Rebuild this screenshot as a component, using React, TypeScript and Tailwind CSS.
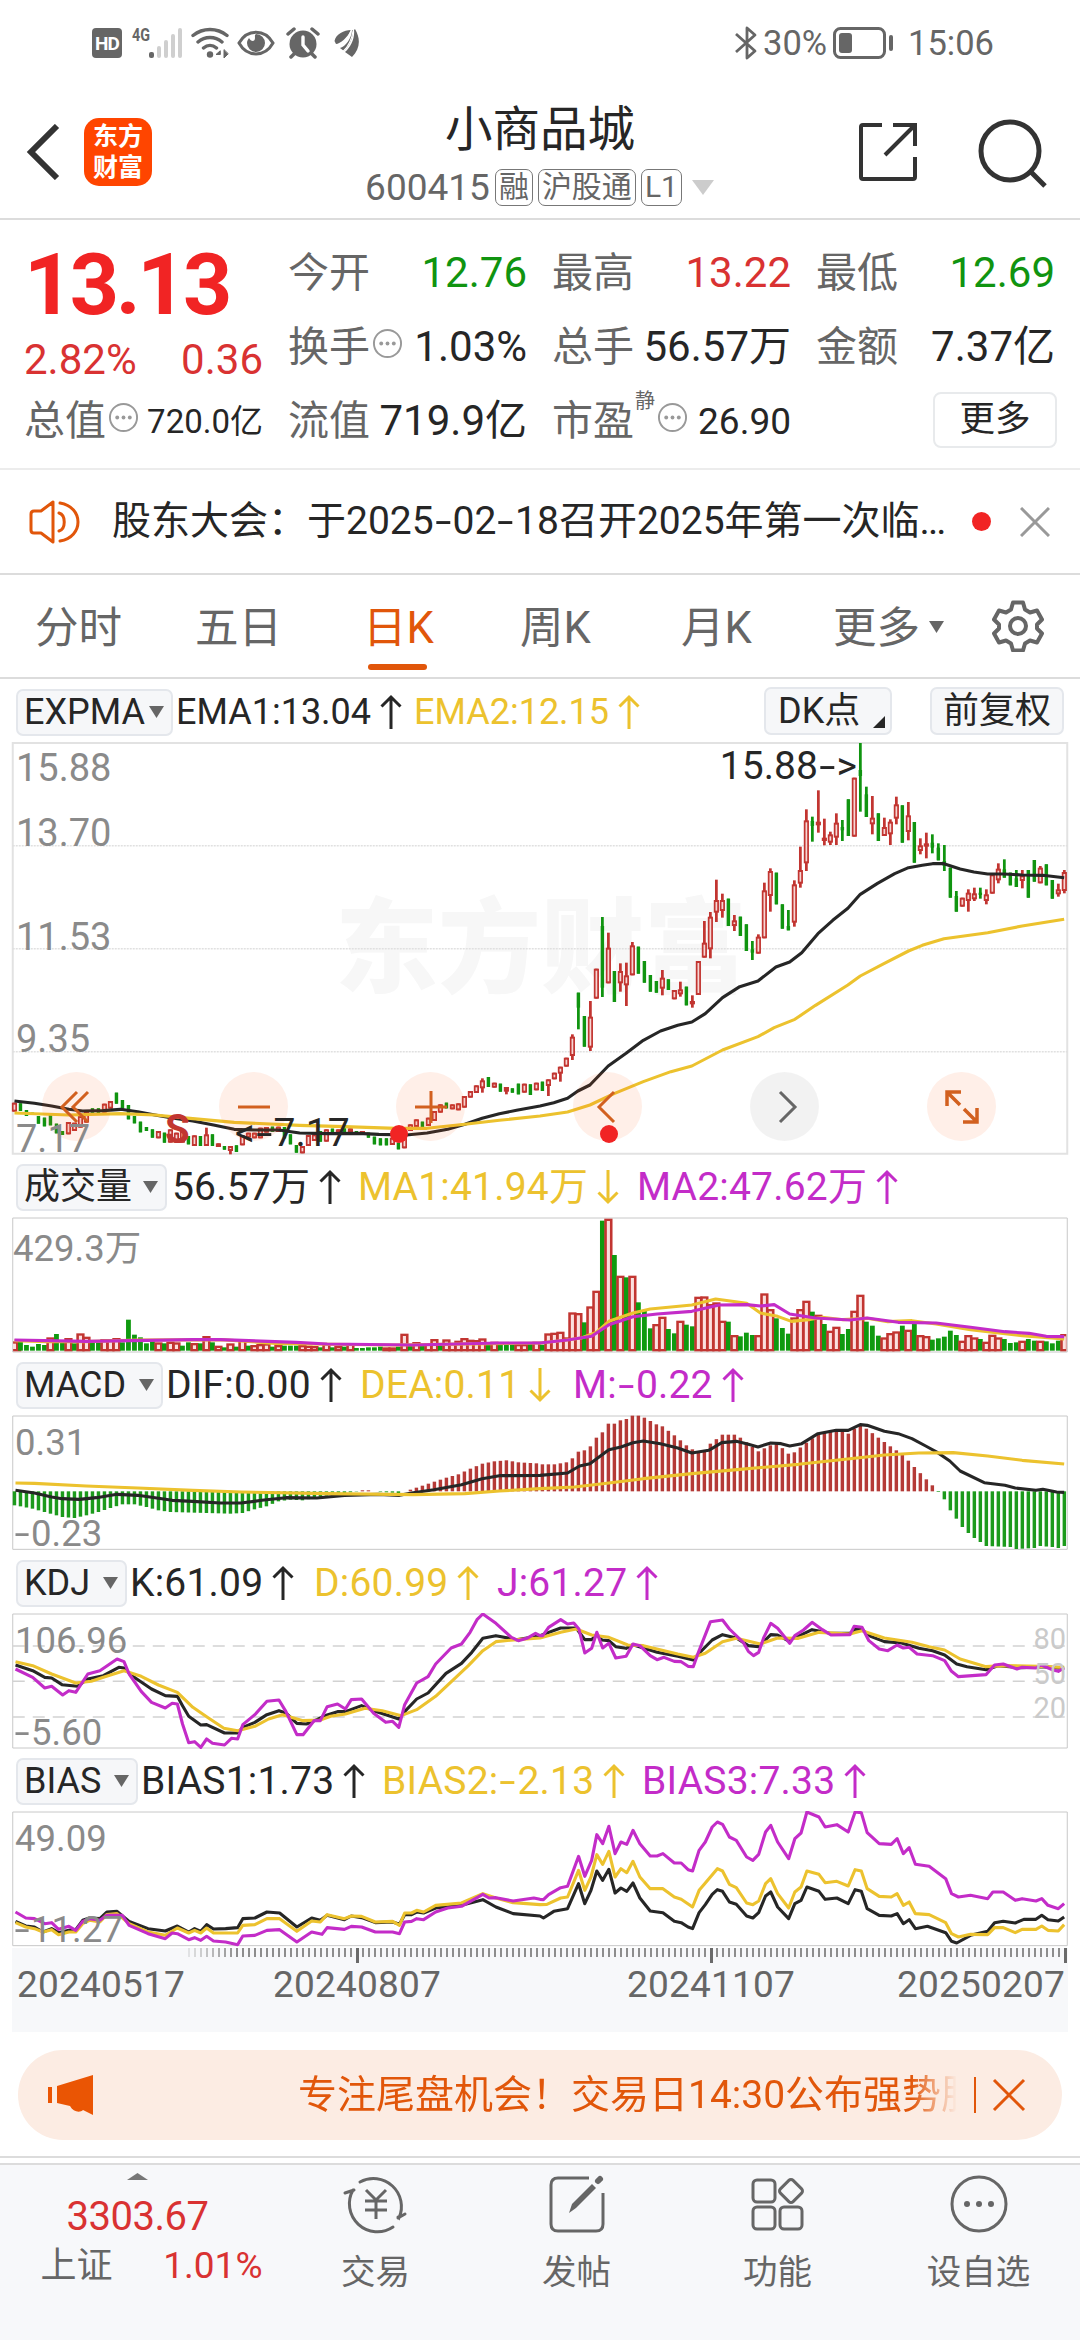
import type { ReactNode } from "react";

/* Charts share one drawing space: 3136 units across the page, 3 units per pixel down. */
const STEP = 17.42;
const SPLIT = 1568;
const cx = (i: number) => 42 + STEP * i;

const RED = "#c23531";
const GREEN = "#109410";
const INK = "#262626";
const YELLOW = "#ecc22e";
const MAGENTA = "#c32cc8";

/* kind, body top, body bottom [, high, low] */
const CANDLES = `r 1295 1322;g 1297 1320;g 1317 1335;g 1325 1332;g 1335 1358;g 1340 1366;g 1332 1363;g 1358 1387;g 1380 1392;r 1353 1390;r 1355 1380;r 1335 1370;r 1320 1355;g 1312 1325;g 1312 1330;r 1298 1325;r 1290 1313;g 1265 1298;g 1287 1313;g 1302 1345;
g 1335 1357;g 1352 1384;g 1368 1380;g 1375 1400;r 1380 1402;g 1385 1415;r 1375 1415;r 1385 1415;r 1380 1415;g 1395 1420;r 1393 1425;g 1395 1425;r 1390 1425 1370 1425;g 1390 1425;r 1417 1428;g 1425 1436;r 1425 1440 1425 1450;g 1423 1443;r 1393 1423;r 1385 1400;
r 1385 1402;r 1370 1402;r 1368 1385;g 1367 1382;r 1367 1383;g 1368 1402;g 1390 1420;g 1422 1445;r 1425 1447;r 1392 1425;r 1390 1410;g 1380 1412;r 1375 1412;g 1373 1390;r 1375 1388;g 1372 1385;r 1372 1385;g 1380 1387;r 1380 1387;g 1385 1400;
g 1397 1420;g 1402 1423;g 1402 1423;r 1400 1422;g 1415 1435;r 1370 1432;r 1360 1380;r 1345 1368;g 1352 1368;r 1340 1365;r 1320 1350;r 1300 1325;g 1295 1312;r 1300 1315;r 1297 1318;r 1275 1310;r 1260 1280;r 1243 1266;r 1228 1252 1222 1265;g 1218 1248;
r 1235 1250;g 1238 1262;r 1248 1262 1248 1270;g 1252 1265;g 1238 1270;r 1238 1265;g 1240 1272;r 1235 1258;g 1232 1260;r 1225 1245 1225 1275;r 1205 1225;r 1187 1208 1187 1232;r 1160 1187;r 1097 1155 1090 1167;g 965 1010 965 1075;g 1035 1127;r 1037 1130 990 1140;r 893 983;g 765 950 738 978;r 830 937 785 937;
g 900 993;r 900 937 877 962;r 913 943 875 1005;r 823 913 813 913;g 827 908;g 870 935;g 912 962;g 930 965;r 920 953 897 973;g 925 957;r 957 985;r 955 970 932 977;g 947 1003;r 990 1000 973 1010;r 870 972;r 815 860 750 860;r 737 835 723 862;r 687 725 626 753;r 687 720 668 740;g 683 765;
r 748 765 732 780;g 737 795;g 760 840;g 835 845 810 867;r 797 848 790 848;r 658 802 635 802;r 600 675 592 722;g 605 700;g 700 773;g 765 778 717 778;r 640 755 628 767;r 597 638 527 650;r 448 577 415 600;g 450 465 437 512;r 452 463 358 485;r 500 510 443 523;r 490 515 482 522;r 455 500 427 522;g 468 478 447 510;g 385 495;
r 320 497;g 297 315 216 422;g 370 438 347 438;r 440 460 375 490;g 427 510;r 468 495 440 495;r 452 490 445 522;r 400 443 377 460;g 403 515;r 433 483 393 508;g 453 575;r 523 540 502 550;r 517 527 485 562;g 515 530 490 547;g 530 568 517 568;g 570 585 522 600;g 590 680;g 675 722 660 722;r 680 707;r 665 690 655 722;
r 667 685 650 690;g 665 672 650 683;r 670 690 655 700;r 610 668;r 593 628 577 637;g 595 620 565 620;g 605 643;g 622 648 597 648;r 613 630 597 652;g 597 680;g 567 632;r 590 637 585 637;g 580 643;g 627 683;r 655 670 638 677;r 603 660 597 667`
  .split(";")
  .map((s) => {
    const [kind, ...v] = s.trim().split(" ");
    const [top, bottom, high, low] = v.map(Number);
    return { up: kind === "r", top, bottom, high: high ?? top, low: low ?? bottom };
  });

const VOLUME = `r572 g572 g583 g588 g580 g583 r560 g550 g575 r562 g578 r548 r558 g575 g575 r565 r565 r562 g575 g507 g552 g560 g578 g572 r575 g578 r573 r575 g585 g575 r577 g578 r556 g575 r585 g590 r578 g588 r567 g585 r583 r580 r578 g588 r583 g585 g585 g585 r583 r585 r586 g590 r577 g590 r586 g588 r577 g592 g592 g590 g590 g588 r590 r590 g588 r549 g585 r574 g585 r577 r565 g580 r566 r577 r570 r562 r567 r568 r563 g575 r573 g583 g583 g583 r580 r580 g575 r573 g582 r548 r546 r543 r560 r485 r487 g515 r467 r420 g210 r204 g313 r375 g380 r375 g455 g480 g533 r520 r498 g535 g548 r510 g522 g527 r438 r437 r460 r455 r510 g513 r553 g557 g546 g553 r553 r428 r475 g503 g532 g549 r500 r475 r450 g483 r492 g520 r540 r528 g550 g535 r480 r432 g513 g525 g555 r560 r547 r542 g525 r537 g508 r553 r556 g567 g563 g558 g540 g553 r570 r553 r560 g565 r573 r552 r560 g565 g577 g575 r570 g565 g570 r570 g572 g578 g570 r550`
  .split(" ")
  .map((s) => ({ up: s[0] === "r", top: Number(s.slice(1)) }));

/* bar index, bar end */
const MACD_KEYS = [
  [0, 1065], [1, 1068], [3, 1075], [5, 1085], [8, 1100], [10, 1103], [12, 1095], [14, 1085], [16, 1073], [18, 1062], [20, 1062], [22, 1070], [24, 1080], [26, 1085], [36, 1090], [38, 1088], [40, 1077], [42, 1068], [44, 1053], [46, 1048], [48, 1050], [50, 1043], [52, 1036], [54, 1030], [57, 1024], [58, 1020], [59, 1020], [60, 1023], [62, 1026], [64, 1028], [66, 1018], [68, 1006], [70, 994], [72, 982], [74, 972], [76, 955], [78, 940], [80, 933], [82, 930], [84, 936], [87, 939], [88, 942], [90, 942], [92, 936], [93, 924], [94, 904], [95, 900], [96, 888], [97, 862], [98, 846], [99, 820], [100, 820], [101, 810], [102, 806], [103, 796], [104, 796], [105, 802], [107, 822], [108, 828], [110, 855], [112, 885], [113, 897], [114, 903], [115, 900], [116, 880], [118, 853], [120, 853], [121, 862], [123, 890], [124, 903], [126, 885], [127, 877], [129, 910], [130, 906], [132, 877], [134, 851], [136, 841], [138, 845], [139, 850], [140, 835], [141, 826], [142, 835], [144, 862], [146, 888], [148, 912], [150, 950], [152, 987], [153, 1005], [154, 1025], [155, 1047], [156, 1080], [157, 1105], [158, 1130], [159, 1148], [160, 1163], [161, 1175], [162, 1187], [166, 1190], [167, 1196], [170, 1193], [171, 1187], [173, 1190], [174, 1193], [175, 1187],
];

const macdBars = MACD_KEYS.slice(0, -1).flatMap(([i, v], k) => {
  const [j, w] = MACD_KEYS[k + 1];
  return Array.from({ length: j - i }, (_, n) => ({ i: i + n, end: v + ((w - v) * n) / (j - i) }));
});
macdBars.push({ i: 175, end: 1187 });

type Points = string;
/* Points of the left half, then of the right half */
const line = (left: Points, right: Points) => {
  const parse = (s: string, dx: number) =>
    s.split(";").map((p) => {
      const [x, y] = p.split(",").map(Number);
      return `${x + dx},${y}`;
    });
  return [...parse(left, 0), ...parse(right, SPLIT)].join(" ");
};

const EMA1 = line(
  "42,1290;100,1297;150,1305;200,1315;240,1320;300,1319;350,1315;400,1322;450,1332;500,1341;560,1350;620,1362;680,1375;740,1377;810,1377;870,1386;950,1388;1040,1387;1100,1390;1180,1392;1240,1386;1300,1375;1350,1360;1400,1342;1450,1328;1500,1318",
  "0,1305;40,1295;80,1282;110,1260;145,1242;198,1185;250,1147;300,1108;350,1080;400,1063;441,1053;480,1028;530,980;580,947;633,930;685,888;725,873;760,845;807,788;850,748;894,712;930,670;980,637;1030,608;1070,590;1110,583;1140,578;1173,578;1220,594;1260,603;1300,609;1347,609;1400,612;1460,613;1522,620"
);
const EMA2 = line(
  "42,1326;200,1332;350,1328;450,1332;560,1343;680,1354;870,1363;1000,1367;1150,1372;1240,1372;1350,1360;1450,1348",
  "0,1335;80,1323;145,1302;215,1268;300,1232;380,1202;441,1185;530,1137;633,1097;680,1070;740,1045;800,1003;894,942;930,915;1000,877;1070,840;1110,823;1173,803;1300,785;1400,765;1522,745"
);
const VMA1 = line(
  "42,570;140,573;250,573;400,568;640,567;800,578;900,580;1150,583",
  "0,577;60,570;120,562;163,545;200,512;270,487;320,475;441,463;510,445;600,458;640,487;690,497;730,512;780,507;820,500;880,507;950,503;1010,513;1080,510;1150,520;1250,537;1400,555;1522,565"
);
const VMA2 = line(
  "42,568;250,572;560,567;640,567;860,575;950,580;1200,583;1450,577",
  "0,577;80,568;150,557;200,522;270,498;340,490;441,482;520,463;600,462;640,466;680,462;725,490;800,502;900,508;950,502;1040,515;1150,517;1250,530;1350,543;1420,548;1470,557;1522,558"
);
const DIF = line(
  "45,1020;100,1028;150,1040;180,1045;230,1047;280,1042;340,1032;400,1035;450,1042;500,1050;560,1053;640,1058;700,1058;760,1050;830,1042;920,1043;1000,1035;1100,1032;1160,1035;1200,1027;1260,1018;1340,1003;1400,985;1450,976",
  "0,975;80,968;115,947;145,940;200,898;235,890;270,877;300,872;350,880;400,893;441,908;490,900;528,877;570,873;600,880;633,890;670,878;700,880;725,887;760,880;807,850;860,840;895,840;930,823;950,825;1000,843;1040,850;1080,865;1120,887;1155,907;1190,932;1220,962;1290,997;1350,1005;1380,1013;1440,1020;1460,1017;1500,1025;1522,1026"
);
const DEA = line(
  "45,998;100,999;250,1007;400,1013;560,1020;700,1025;950,1030;1200,1033;1350,1030;1450,1022",
  "0,1015;100,1010;200,998;300,985;441,970;580,957;750,942;900,925;1000,914;1100,908;1200,907;1300,917;1400,930;1522,941"
);
const KDJ_J = line(
  "45,325;95,350;130,382;150,377;182,403;200,390;220,395;255,340;290,330;340,295;360,303;375,340;410,392;440,425;480,442;500,428;515,430;530,490;548,546;565,543;583,560;600,535;617,548;652,553;672,533;690,535;705,492;740,462;775,422;810,418;830,452;862,522;880,522;912,480;930,480;950,438;980,430;1003,445;1020,417;1050,415;1085,458;1120,485;1140,482;1158,500;1175,432;1210,367;1243,348;1265,310;1310,262;1340,250;1365,215;1385,177;1402,160;1440,188;1485,230;1505,240;1530,233;1555,218",
  "0,225;8,225;25,200;60,177;80,190;98,187;113,205;130,277;150,263;165,215;182,262;200,248;220,292;250,287;270,250;290,255;320,285;340,297;360,290;390,302;410,303;430,317;445,318;460,275;495,183;530,178;550,205;590,245;605,272;620,285;635,275;650,230;670,188;690,203;725,248;740,225;765,208;790,185;820,207;845,223;900,222;912,197;935,200;955,240;985,265;1010,270;1037,253;1055,262;1072,260;1095,280;1140,285;1175,300;1195,332;1215,348;1295,342;1320,313;1345,310;1385,325;1400,320;1440,322;1455,313;1490,328;1505,332;1522,322"
);
const KDJ_K = line(
  "45,313;95,330;130,350;150,352;180,372;225,377;255,355;300,345;345,320;360,322;380,343;440,385;480,405;515,407;530,435;548,467;583,493;600,492;652,517;690,517;705,500;740,485;775,462;810,450;830,457;862,488;890,490;920,477;950,463;980,453;1003,453;1050,435;1085,450;1158,475;1175,453;1210,415;1243,397;1295,338;1340,308;1370,275;1402,233;1440,225;1500,237",
  "0,225;60,202;105,202;130,237;150,237;165,222;180,238;200,240;220,258;250,263;270,252;300,262;340,275;400,287;445,298;460,280;500,238;530,222;570,232;605,255;635,258;670,222;690,223;720,240;760,222;790,207;840,217;900,218;915,205;935,207;960,227;1000,243;1050,247;1100,263;1140,270;1175,283;1210,310;1240,318;1295,327;1330,315;1400,321;1455,318;1522,323"
);
const KDJ_D = line(
  "45,303;95,315;150,340;220,367;265,362;300,350;360,330;410,347;460,373;515,395;560,440;600,468;650,503;690,510;740,497;780,475;820,462;880,480;930,478;960,467;1003,460;1060,443;1110,450;1165,465;1210,447;1265,407;1360,315;1402,270;1440,243;1500,237",
  "0,232;60,215;105,205;150,223;200,230;255,253;300,255;400,280;445,290;480,278;530,243;570,233;640,250;690,232;750,233;810,215;900,220;935,210;1000,232;1080,245;1130,258;1175,268;1220,295;1295,318;1350,315;1450,317;1522,320"
);
const BIAS3 = line(
  "45,1055;75,1073;100,1075;130,1090;150,1087;170,1107;200,1098;220,1110;240,1083;260,1075;290,1080;310,1065;355,1065;375,1095;430,1120;480,1135;500,1118;515,1120;548,1138;565,1132;583,1140;600,1128;620,1142;655,1145;690,1153;705,1127;740,1125;775,1110;812,1108;862,1145;905,1115;935,1122;950,1102;1000,1107;1020,1098;1050,1100;1090,1115;1140,1115;1160,1120;1175,1085;1195,1083;1210,1075;1230,1078;1265,1055;1300,1043;1340,1038;1402,1002;1420,1013;1440,1012;1490,1022;1550,1013",
  "0,1017;10,1018;25,1003;60,982;80,978;112,888;130,948;150,900;165,823;182,850;200,798;218,880;235,845;252,852;270,810;290,850;320,887;340,887;357,880;390,908;410,908;430,928;443,932;462,870;480,845;500,800;515,785;530,792;550,830;570,840;600,890;618,900;635,882;655,815;670,795;690,845;722,895;740,835;758,818;775,755;810,770;828,800;862,793;895,815;915,755;933,757;950,817;985,850;1020,852;1037,835;1055,880;1072,862;1090,912;1130,918;1178,955;1195,1000;1215,1010;1250,1005;1300,1015;1315,995;1345,995;1380,1020;1400,1015;1440,1022;1457,1015;1475,1035;1505,1045;1522,1030"
);
const BIAS2 = line(
  "45,1087;75,1100;100,1105;125,1115;150,1108;170,1123;200,1115;220,1115;240,1090;260,1080;290,1085;310,1063;340,1060;375,1090;430,1115;480,1125;515,1103;548,1118;565,1110;583,1118;600,1103;620,1118;690,1118;705,1095;740,1093;775,1075;812,1075;862,1113;905,1082;930,1085;950,1063;1000,1075;1020,1067;1050,1068;1090,1085;1140,1083;1160,1095;1175,1058;1195,1058;1210,1050;1230,1055;1265,1035;1340,1028;1402,1000;1440,1013;1490,1027",
  "0,1033;20,1032;60,1013;80,1010;112,930;130,990;148,950;165,883;182,912;200,873;218,950;235,925;252,937;270,903;290,950;320,985;357,985;390,1010;410,1017;443,1040;462,990;480,968;515,925;530,932;550,972;570,982;600,1028;618,1033;635,1022;655,970;670,955;690,1000;722,1043;740,995;758,980;775,932;810,942;828,967;862,963;895,977;915,928;933,932;950,985;985,1008;1020,1010;1037,1000;1055,1035;1072,1025;1090,1060;1130,1063;1178,1087;1195,1120;1215,1130;1250,1122;1300,1123;1320,1102;1345,1102;1380,1117;1400,1107;1440,1107;1457,1097;1475,1110;1505,1112;1522,1093"
);
const BIAS1 = line(
  "45,1083;75,1097;100,1100;125,1115;150,1105;170,1117;200,1110;220,1108;240,1080;260,1073;290,1075;310,1055;340,1053;375,1083;430,1105;480,1112;515,1097;548,1115;565,1105;583,1113;600,1093;620,1106;655,1105;690,1102;705,1075;740,1073;775,1055;812,1058;862,1100;905,1073;930,1080;950,1065;1000,1078;1020,1067;1050,1072;1090,1087;1140,1085;1160,1092;1175,1063;1195,1063;1210,1055;1230,1058;1265,1043;1340,1035;1402,1018;1440,1040;1490,1060",
  "0,1067;10,1073;40,1053;80,1045;112,970;130,1030;148,990;165,932;182,960;200,927;218,998;235,983;252,993;270,968;290,1013;320,1052;357,1057;390,1083;410,1087;430,1100;443,1105;462,1057;480,1033;500,1002;515,988;530,993;550,1025;570,1032;600,1067;618,1073;635,1057;655,1007;670,995;690,1040;722,1075;740,1030;758,1020;775,980;810,993;828,1017;862,1013;895,1030;915,988;933,993;950,1045;985,1065;1020,1067;1037,1060;1055,1090;1072,1078;1090,1105;1125,1098;1178,1117;1195,1143;1210,1148;1250,1125;1300,1113;1320,1087;1345,1083;1380,1088;1405,1077;1440,1077;1457,1065;1475,1078;1505,1082;1522,1070"
);

function Curve({ points, color }: { points: string; color: string }) {
  return (
    <polyline
      points={points}
      fill="none"
      stroke={color}
      strokeWidth={3.1}
      strokeLinejoin="round"
      vectorEffect="non-scaling-stroke"
    />
  );
}

function Plot({ top, height, className, children }: { top: number; height: number; className: string; children: ReactNode }) {
  return (
    <svg viewBox={`0 ${top} 3136 ${height}`} preserveAspectRatio="none" className={`block w-full ${className}`}>
      {children}
    </svg>
  );
}

function Frame({ y, h, color = "#c8c8c8", w = 1 }: { y: number; h: number; color?: string; w?: number }) {
  return (
    <rect x={37} y={y} width={3062} height={h} fill="none" stroke={color} strokeWidth={w} vectorEffect="non-scaling-stroke" />
  );
}

function PriceChart() {
  return (
    <Plot top={213} height={1239} className="h-[413px]">
      <Frame y={216} h={1232} color="#e2e2e2" w={2} />
      {[524, 833, 1142].map((y) => (
        <line key={y} x1={37} x2={3099} y1={y} y2={y} stroke="#e0e0e0" strokeWidth={1.5} strokeDasharray="2 1" vectorEffect="non-scaling-stroke" />
      ))}
      {CANDLES.map((c, i) => {
        const x = cx(i);
        const h = c.bottom - c.top;
        return (
          <g key={i} fill={c.up ? RED : GREEN}>
            <rect x={x - 4} y={c.high} width={8} height={c.low - c.high} />
            <rect x={x - (c.up ? 7.5 : 5)} y={c.top} width={c.up ? 15 : 10} height={h} />
            {c.up && h > 14 && <rect x={x - 2.5} y={c.top + 6} width={5} height={h - 12} fill="#f7d6d4" />}
          </g>
        );
      })}
      <Curve points={EMA1} color={INK} />
      <Curve points={EMA2} color={YELLOW} />
    </Plot>
  );
}

function VolumeChart() {
  return (
    <Plot top={199} height={408} className="h-[136px]">
      <Frame y={202} h={402} />
      {VOLUME.map((b, i) =>
        b.up ? (
          <g key={i}>
            <rect x={Math.max(38, cx(i) - 12)} y={b.top} width={i === 175 ? 18 : 24} height={602 - b.top} fill={RED} />
            <rect x={cx(i) - 4.5} y={b.top + 7} width={9} height={Math.max(0, 588 - b.top)} fill="#fbe0df" />
          </g>
        ) : (
          <rect key={i} x={cx(i) - 7} y={b.top} width={14} height={600 - b.top} fill="#0f9a0f" />
        )
      )}
      <Curve points={VMA1} color={YELLOW} />
      <Curve points={VMA2} color={MAGENTA} />
    </Plot>
  );
}

function MacdChart() {
  return (
    <Plot top={794} height={408} className="h-[136px]">
      <Frame y={797} h={400} />
      {macdBars.map(({ i, end }) => (
        <rect
          key={i}
          x={cx(i) - 5}
          y={Math.min(1023, end)}
          width={10}
          height={Math.abs(end - 1023)}
          fill={end < 1023 ? "#b53a37" : "#1c9a1c"}
        />
      ))}
      <Curve points={DIF} color={INK} />
      <Curve points={DEA} color={YELLOW} />
    </Plot>
  );
}

function KdjChart() {
  return (
    <Plot top={157} height={408} className="h-[136px]">
      <Frame y={160} h={402} />
      {[256, 362, 469].map((y) => (
        <line key={y} x1={37} x2={3099} y1={y} y2={y} stroke="#d2d2d2" strokeWidth={1.5} strokeDasharray="12 8" vectorEffect="non-scaling-stroke" />
      ))}
      <Curve points={KDJ_K} color={INK} />
      <Curve points={KDJ_D} color={YELLOW} />
      <Curve points={KDJ_J} color={MAGENTA} />
    </Plot>
  );
}

function BiasChart() {
  return (
    <Plot top={752} height={408} className="h-[136px]">
      <Frame y={755} h={401} />
      <Curve points={BIAS1} color={INK} />
      <Curve points={BIAS2} color={YELLOW} />
      <Curve points={BIAS3} color={MAGENTA} />
    </Plot>
  );
}

function Ruler() {
  return (
    <svg viewBox="0 0 1080 18" className="block h-[18px] w-full">
      {Array.from({ length: 147 }, (_, n) => {
        const i = n + 29;
        const major = i === 57 || i === 116 || i === 175;
        return (
          <rect
            key={i}
            x={14 + i * 6}
            y={2}
            width={major ? 3 : 2}
            height={major ? 15 : 9}
            fill={major ? "#6a6a6a" : "#8d8d8d"}
            opacity={Math.min(1, (i - 27) / 10)}
          />
        );
      })}
    </svg>
  );
}

function Dash() {
  return <span className="mx-[4px] inline-block scale-x-150">-</span>;
}

function Arrow({ down = false }: { down?: boolean }) {
  return (
    <svg viewBox="0 0 22 36" className={`ml-[9px] h-[36px] w-[22px] shrink-0 ${down ? "rotate-180" : ""}`} fill="none" stroke="currentColor" strokeWidth={3}>
      <path d="M11 35V3M1.5 12.5 11 3l9.500 9.500" />
    </svg>
  );
}

function Triangle({ className }: { className: string }) {
  return (
    <svg viewBox="0 0 10 8" preserveAspectRatio="none" className={`shrink-0 ${className}`} fill="currentColor">
      <path d="M0 0h10L5 8z" />
    </svg>
  );
}

function Legend({
  name,
  width,
  items,
  size = "text-[39px] tracking-[0.2px]",
}: {
  name: string;
  width: string;
  items: { text: ReactNode; w: string; color: string; down?: boolean }[];
  size?: string;
}) {
  return (
    <div className="flex h-[63px] items-center pl-[16px] pt-[3px] whitespace-nowrap">
      <div className={`flex h-[47px] items-center justify-between rounded-[7px] border-2 border-[#e4e7ec] bg-[#f6f7f9] pl-[6px] pr-[7px] text-[36px] leading-none text-[#262626] ${width}`}>
        {name}
        <Triangle className="h-[12px] w-[15px] text-[#666]" />
      </div>
      {items.map((it, i) => (
        <div key={i} className={`flex shrink-0 items-center leading-none ${size} ${it.w} ${it.color}`}>
          {it.text}
          <Arrow down={it.down} />
        </div>
      ))}
    </div>
  );
}

const PRICE_AXIS = "absolute text-[38px] leading-none text-[#8a8a8a]";
const AXIS = "absolute text-[36.500px] leading-none text-[#8a8a8a]";

function Dots() {
  return (
    <svg viewBox="0 0 32 32" className="-mt-[7px] ml-[2px] h-[31px] w-[31px] shrink-0">
      <circle cx="16" cy="16" r="14" fill="none" stroke="#999" strokeWidth="2" />
      <g fill="#999">
        <circle cx="9.500" cy="16" r="2" />
        <circle cx="16" cy="16" r="2" />
        <circle cx="22.500" cy="16" r="2" />
      </g>
    </svg>
  );
}

function Cell({ label, value, color = "text-[#262626]", size = "text-[42px]", mark }: { label: string; value: string; color?: string; size?: string; mark?: ReactNode }) {
  return (
    <div className="flex h-[74px] items-center justify-between whitespace-nowrap">
      <span className="flex items-center text-[41px] leading-none text-[#666]">
        {label}
        {mark}
      </span>
      <span className={`leading-none ${size} ${color}`}>{value}</span>
    </div>
  );
}

function StatusBar() {
  return (
    <div className="flex h-[86px] items-center justify-between pl-[92px] pr-[86px] text-[#666]">
      <div className="flex items-center">
        <div className="flex h-[30px] w-[30px] items-center justify-center rounded-[4px] bg-[#666] text-[19px] font-bold leading-none tracking-[-1px] text-white">HD</div>
        <svg viewBox="0 0 52 34" className="ml-[9px] h-[34px] w-[52px] overflow-visible">
          <text x="1" y="15" fontSize="18" fontWeight="700" fill="#666" textLength="18" lengthAdjust="spacingAndGlyphs">4G</text>
          <rect x="18" y="26" width="5" height="6" rx="2" fill="#666" />
          <g fill="#cfcfcf">
            <rect x="26" y="20" width="4" height="12" rx="2" />
            <rect x="33" y="14" width="4" height="18" rx="2" />
            <rect x="40" y="8" width="4" height="24" rx="2" />
            <rect x="47" y="2" width="4" height="30" rx="2" />
          </g>
        </svg>
        <svg viewBox="0 0 38 34" className="ml-[8px] h-[34px] w-[38px]" fill="none" stroke="#666" strokeWidth="3.400" strokeLinecap="round">
          <path d="M2 9.500C12 1.500 26 1.500 36 9.500M7 16c7-6 17-6 24 0M12.500 22c4-3.500 9-3.500 13 0" />
          <circle cx="19" cy="28.500" r="3.200" fill="#666" stroke="none" />
          <path d="m29 25-4 3.500h4zM33 24v8l4-4z" fill="#666" stroke="#666" strokeWidth="1" />
        </svg>
        <svg viewBox="0 0 38 28" className="ml-[8px] h-[28px] w-[38px]">
          <path d="M2 14C10-.5 28-.5 36 14 28 28.500 10 28.500 2 14z" fill="none" stroke="#666" strokeWidth="3" />
          <path d="M19 5a9 9 0 1 1-9 9c0-2 1-3.500 2-5 2 4 6 4 6 0 0-2-.5-3 1-4z" fill="#666" />
        </svg>
        <svg viewBox="0 0 34 32" className="ml-[11px] h-[32px] w-[34px]">
          <circle cx="17" cy="17" r="13.500" fill="#666" />
          <path d="M2 7l6-5M32 7l-6-5M5 30l4-4M29 30l-4-4" stroke="#666" strokeWidth="3.500" strokeLinecap="round" />
          <path d="M17 10v8l5 6" fill="none" stroke="#fff" strokeWidth="3.400" strokeLinecap="round" />
        </svg>
        <svg viewBox="0 0 25 28" className="ml-[14px] h-[28px] w-[25px]">
          <path d="M17 1C10 1 2 5 .5 12L2 15C6 15 14 8 17 1zM18 1c0 8-7 17-12 18l4 3c5-5 9-12 9-21zM20 1c1 8-3 17-9 22l7 5c8-8 9-18 3-28z" fill="#666" />
          <path d="M17.500 1C15 8 9 15 3.500 17.500M19.300 1C18 9 14 18 9 22.500" fill="none" stroke="#fff" strokeWidth="1.200" />
        </svg>
      </div>
      <div className="flex items-center text-[34.500px] leading-none">
        <svg viewBox="0 0 22 34" className="h-[34px] w-[22px]" fill="none" stroke="#666" strokeWidth="2.800" strokeLinejoin="round">
          <path d="M1 8l19 17-8 7V2l8 7L1 26" />
        </svg>
        <span className="ml-[6px]">30%</span>
        <svg viewBox="0 0 62 32" className="ml-[6px] h-[32px] w-[62px]">
          <rect x="1.500" y="1.500" width="50" height="29" rx="6" fill="none" stroke="#666" strokeWidth="3" />
          <rect x="6" y="6" width="13" height="20" rx="3" fill="#666" />
          <rect x="56" y="8" width="4" height="16" rx="2" fill="#666" />
        </svg>
        <span className="ml-[13px]">15:06</span>
      </div>
    </div>
  );
}

function Tag({ children }: { children: ReactNode }) {
  return <span className="flex h-[37px] items-center rounded-[7px] border-[1.500px] border-[#777] px-[3px] text-[30px] leading-none">{children}</span>;
}

function Header() {
  return (
    <div className="relative flex h-[134px] items-start justify-between border-b-2 border-[#dcdcdc] pl-[26px] pr-[32px]">
      <div className="flex items-center pt-[32px]">
        <svg viewBox="0 0 34 56" className="h-[56px] w-[34px]" fill="none" stroke="#333" strokeWidth="6">
          <path d="M31 2 5 28l26 26" />
        </svg>
        <div className="ml-[24px] flex h-[68px] w-[68px] flex-col items-center justify-center gap-[6px] rounded-[15px] bg-[#ff4500] text-[25px] font-bold leading-none text-white">
          <span>东方</span>
          <span>财富</span>
        </div>
      </div>
      <div className="absolute inset-x-0 top-[19px] flex flex-col items-center">
        <div className="text-[47.500px] leading-[50px] text-[#262626]">小商品城</div>
        <div className="mt-[12px] flex h-[40px] items-center gap-[5px] pr-[1px] text-[#666]">
          <span className="text-[37px] leading-none">600415</span>
          <Tag>融</Tag>
          <Tag>沪股通</Tag>
          <Tag>L1</Tag>
          <Triangle className="ml-[5px] h-[15px] w-[22px] text-[#ccc]" />
        </div>
      </div>
      <div className="flex items-start pt-[36px]">
        <svg viewBox="0 0 60 60" className="h-[60px] w-[60px]" fill="none" stroke="#333" strokeWidth="4">
          <path d="M24 3H5Q3 3 3 5v50q0 2 2 2h50q2 0 2-2V35" />
          <path d="M35 3h22v21M57 3 27 33" />
        </svg>
        <svg viewBox="0 0 72 72" className="-mt-[6px] ml-[58px] h-[72px] w-[72px]" fill="none" stroke="#333" strokeWidth="5">
          <circle cx="34" cy="35" r="29" />
          <path d="m54 55 15 15" />
        </svg>
      </div>
    </div>
  );
}

function Quote() {
  return (
    <div className="flex h-[250px] border-b-2 border-[#ececec] pt-[16px]">
      <div className="ml-[24px] w-[239px]">
        <div className="h-[100px] pt-[7px] text-[86px] font-bold leading-[84px] tracking-[-3.500px] text-[#f12424]">13.13</div>
        <div className="flex h-[48px] items-center justify-between text-[42px] leading-none text-[#d93232]">
          <span>2.82%</span>
          <span>0.36</span>
        </div>
        <Cell label="总值" value="720.0亿" size="text-[33px]" mark={<Dots />} />
      </div>
      <div className="ml-[25px] w-[239px]">
        <Cell label="今开" value="12.76" color="text-[#109410]" />
        <Cell label="换手" value="1.03%" mark={<Dots />} />
        <Cell label="流值" value="719.9亿" />
      </div>
      <div className="ml-[25px] w-[239px]">
        <Cell label="最高" value="13.22" color="text-[#d93232]" />
        <Cell label="总手" value="56.57万" />
        <Cell
          label="市盈"
          value="26.90"
          size="text-[37px]"
          mark={
            <>
              <span className="-mt-[40px] ml-[1px] text-[20px]">静</span>
              <Dots />
            </>
          }
        />
      </div>
      <div className="ml-[25px] w-[239px]">
        <Cell label="最低" value="12.69" color="text-[#109410]" />
        <Cell label="金额" value="7.37亿" />
        <div className="-mr-[2px] ml-auto mt-[8px] flex h-[56px] w-[124px] items-center justify-center rounded-[8px] border-2 border-[#e8eaec] text-[35.500px] leading-none text-[#262626]">更多</div>
      </div>
    </div>
  );
}

function News() {
  return (
    <div className="flex h-[105px] items-center border-b-2 border-[#dcdcdc] pl-[29px] whitespace-nowrap">
      <svg viewBox="0 0 52 44" className="h-[44px] w-[52px]" fill="none" stroke="#e1560a" strokeWidth="3">
        <path d="M24 2v40l-12-9H5q-3 0-3-3V14q0-3 3-3h7z" strokeLinejoin="round" />
        <path d="M30 13c7 2 7 16 0 18M31 3c24 4 24 34 0 38" strokeLinecap="round" />
      </svg>
      <div className="ml-[31px] w-[840px] text-[39px] leading-none text-[#262626]">
        股东大会：于2025
        <Dash />
        02
        <Dash />
        18召开2025年第一次临<span className="tracking-[-2px]">...</span>
      </div>
      <div className="ml-[20px] h-[19px] w-[19px] rounded-full bg-[#f12424]" />
      <svg viewBox="0 0 30 30" className="ml-[29px] h-[30px] w-[30px]" fill="none" stroke="#999" strokeWidth="3">
        <path d="m1 1 28 28M29 1 1 29" />
      </svg>
    </div>
  );
}

function Tabs() {
  return (
    <div className="relative flex h-[104px] items-center border-b-2 border-[#dcdcdc] pl-[35px] pt-[5px] text-[43.500px] leading-none text-[#666] whitespace-nowrap">
      <span className="w-[160px]">分时</span>
      <span className="w-[168px]">五日</span>
      <span className="relative w-[157px] text-[#e1560a]">
        日K
        <span className="absolute left-[5px] top-[57px] h-[6px] w-[59px] rounded-full bg-[#e1560a]" />
      </span>
      <span className="w-[161px]">周K</span>
      <span className="w-[152px]">月K</span>
      <span>更多</span>
      <Triangle className="ml-[9px] -mt-[4px] h-[12px] w-[15px]" />
      <svg viewBox="0 0 52 52" className="-mt-[5px] ml-[48px] h-[52px] w-[52px]" fill="none" stroke="#666" strokeWidth="4" strokeLinejoin="round">
        <path d="M21 2.500h10l2 7 5 3 7-2 5 9-5 5v4l5 5-5 9-7-2-5 3-2 7H21l-2-7-5-3-7 2-5-9 5-5v-4l-5-5 5-9 7 2 5-3z" />
        <circle cx="26" cy="26" r="8" />
      </svg>
    </div>
  );
}

const BUTTON = "flex h-[69px] w-[69px] items-center justify-center rounded-full";

function ChartButtons() {
  const peach = `${BUTTON} bg-[#ff5a14]/10`;
  return (
    <div className="absolute left-[42px] top-[330px] flex gap-[108px]">
      <div className={peach}>
        <svg viewBox="0 0 34 34" className="mr-[6px] h-[34px] w-[34px]" fill="none" stroke="#d2601f" strokeWidth="3">
          <path d="M20 2 5 17l15 15M31 2 16 17l15 15" />
        </svg>
      </div>
      <div className={peach}>
        <svg viewBox="0 0 34 34" className="h-[34px] w-[34px]" stroke="#d2601f" strokeWidth="3">
          <path d="M1 17h32" />
        </svg>
      </div>
      <div className={peach}>
        <svg viewBox="0 0 34 34" className="h-[34px] w-[34px]" stroke="#d2601f" strokeWidth="3">
          <path d="M1 17h32M17 1v32" />
        </svg>
      </div>
      <div className={peach}>
        <svg viewBox="0 0 34 34" className="mr-[4px] h-[34px] w-[34px]" fill="none" stroke="#d2601f" strokeWidth="3">
          <path d="M25 2 10 17l15 15" />
        </svg>
      </div>
      <div className={`${BUTTON} bg-black/5`}>
        <svg viewBox="0 0 34 34" className="ml-[4px] h-[34px] w-[34px]" fill="none" stroke="#666" strokeWidth="3">
          <path d="m10 2 15 15-15 15" />
        </svg>
      </div>
      <div className={peach}>
        <svg viewBox="0 0 34 34" className="h-[34px] w-[34px]" fill="none" stroke="#d2601f" strokeWidth="3.500">
          <path d="M2 16V2h14M2 2l13 13M32 18v14H18M32 32 19 19" />
        </svg>
      </div>
    </div>
  );
}

function PromoBanner() {
  return (
    <div className="mx-[18px] mt-[18px] flex h-[90px] items-center rounded-full bg-[#fcece3] pl-[30px] text-[#e1560a]">
      <svg viewBox="0 0 46 40" className="h-[40px] w-[46px]" fill="#ea5504">
        <path d="M0 12h4v16H0zM9 11 45 0v40l-10-5c-3 3-10 2-13-4l-13-3z" />
      </svg>
      <div className="ml-[204px] w-[659px] overflow-hidden text-[39px] leading-[50px] whitespace-nowrap [mask-image:linear-gradient(to_right,black_93%,transparent_100%)]">
        专注尾盘机会！交易日14:30公布强势股
      </div>
      <div className="ml-[17px] h-[36px] w-[2px] bg-[#e1560a]" />
      <svg viewBox="0 0 34 34" className="ml-[16px] h-[34px] w-[34px]" fill="none" stroke="#e1560a" strokeWidth="3">
        <path d="m2 2 30 30M32 2 2 32" />
      </svg>
    </div>
  );
}

function NavItem({ label, children }: { label: string; children: ReactNode }) {
  return (
    <div className="flex w-[201px] flex-col items-center pt-[8px] text-[34.500px] leading-none text-[#666]">
      <svg viewBox="0 0 66 62" className="mb-[20px] h-[62px] w-[66px]" fill="none" stroke="#666" strokeWidth="3">
        {children}
      </svg>
      {label}
    </div>
  );
}

function BottomBar() {
  return (
    <div className="mt-[16px] border-t-2 border-[#dcdcdc] bg-white pt-[5px]">
      <div className="flex h-[177px] border-t-2 border-[#dcdcdc] bg-[#f7f8fa]">
        <div className="flex w-[275px] flex-col items-center">
          <Triangle className="mt-[8px] h-[7px] w-[21px] rotate-180 text-[#777]" />
          <div className="mt-[17px] text-[40px] leading-[40px] tracking-[-0.5px] text-[#d93232]">3303.67</div>
          <div className="ml-[28px] mt-[9px] flex w-[222px] items-center justify-between text-[36px] leading-[40px] text-[#666]">
            上证<span className="text-[37px] text-[#d93232]">1.01%</span>
          </div>
        </div>
        <NavItem label="交易">
          <path d="M17 9A28 28 0 0 1 56 45l-1-1M62 41l-7 4M10 17A28 28 0 0 0 50 54M2 20l9-3" strokeLinecap="round" />
          <path d="M23 17l10 10 10-10M22 28h22M22 37h22M33 27v19" />
        </NavItem>
        <NavItem label="发帖">
          <path d="M45 5H14q-7 0-7 7v39q0 7 7 7h38q7 0 7-7V20" />
          <path d="m25 40 3-9 20-20 4 4-20 20z" fill="#666" stroke="none" />
          <path d="m54 8 2-2" strokeWidth="6" strokeLinecap="round" />
        </NavItem>
        <NavItem label="功能">
          <rect x="8" y="7" width="22" height="22" rx="4" />
          <rect x="8" y="34" width="22" height="22" rx="4" />
          <rect x="35" y="34" width="22" height="22" rx="4" />
          <rect x="37" y="9" width="18" height="18" rx="3" transform="rotate(45 46 18)" />
        </NavItem>
        <NavItem label="设自选">
          <circle cx="33" cy="31" r="27" />
          <g fill="#666" stroke="none">
            <circle cx="21" cy="31" r="3" />
            <circle cx="33" cy="31" r="3" />
            <circle cx="45" cy="31" r="3" />
          </g>
        </NavItem>
      </div>
    </div>
  );
}

export default function App() {
  return (
    <div className="h-[2340px] w-[1080px] overflow-hidden bg-white font-['Roboto','Noto_Sans_CJK_SC',sans-serif]">
      <StatusBar />
      <Header />
      <Quote />
      <News />
      <Tabs />

      <div className="relative">
        <Legend
          name="EXPMA"
          width="w-[157px]"
          size="text-[36px]"
          items={[
            { text: "EMA1:13.04", w: "ml-[3px] w-[238px]", color: "text-[#262626]" },
            { text: "EMA2:12.15", w: "", color: "text-[#ecc22e]" },
          ]}
        />
        <div className="absolute right-[16px] top-[8px] flex gap-[38px] text-[36px] leading-none text-[#262626]">
          <div className="relative flex h-[48px] w-[128px] items-center rounded-[7px] border-2 border-[#e4e7ec] bg-[#f6f7f9] pl-[12px]">
            DK点
            <svg viewBox="0 0 12 12" className="absolute bottom-[5px] right-[5px] h-[12px] w-[12px]">
              <path d="M12 0v12H0z" fill="#262626" />
            </svg>
          </div>
          <div className="flex h-[48px] w-[134px] items-center justify-center rounded-[7px] border-2 border-[#e4e7ec] bg-[#f6f7f9]">前复权</div>
        </div>
      </div>

      <div className="relative h-[412px]">
        <div className="absolute left-[335px] top-[156px] text-[103px] font-black leading-none text-[#f7f7f7]">东方财富</div>
        <div className="relative">
          <PriceChart />
        </div>
        <ChartButtons />
        <span className={`${PRICE_AXIS} left-[16px] top-[7px]`}>15.88</span>
        <span className={`${PRICE_AXIS} left-[16px] top-[72px]`}>13.70</span>
        <span className={`${PRICE_AXIS} left-[16px] top-[176px]`}>11.53</span>
        <span className={`${PRICE_AXIS} left-[16px] top-[278px]`}>9.35</span>
        <span className={`${PRICE_AXIS} left-[16px] top-[378px]`}>7.17</span>
        <span className="absolute right-[223px] top-[5px] text-[39px] leading-none text-[#262626]">15.88<Dash />&gt;</span>
        <span className="absolute left-[235px] top-[372px] text-[39px] leading-none text-[#262626]">&lt;<Dash />7.17</span>
        <span className="absolute left-[165px] top-[368px] text-[40px] font-bold leading-none text-[#c23531]">S</span>
        <span className="absolute left-[390px] top-[383px] h-[18px] w-[18px] rounded-full bg-[#f12424]" />
        <span className="absolute left-[600px] top-[383px] h-[18px] w-[18px] rounded-full bg-[#f12424]" />
      </div>

      <Legend
        name="成交量"
        width="w-[151px]"
        items={[
          { text: "56.57万", w: "ml-[5px] w-[186px]", color: "text-[#262626]" },
          { text: "MA1:41.94万", w: "w-[279px]", color: "text-[#ecc22e]", down: true },
          { text: "MA2:47.62万", w: "", color: "text-[#c32cc8]" },
        ]}
      />
      <div className="relative h-[135px]">
        <VolumeChart />
        <span className={`${AXIS} left-[13px] top-[14px]`}>429.3万</span>
      </div>

      <Legend
        name="MACD"
        width="w-[147px]"
        items={[
          { text: "DIF:0.00", w: "ml-[3px] w-[194px]", color: "text-[#262626]" },
          { text: "DEA:0.11", w: "w-[213px]", color: "text-[#ecc22e]", down: true },
          { text: <span>M:<Dash />0.22</span>, w: "", color: "text-[#c32cc8]" },
        ]}
      />
      <div className="relative h-[135px]">
        <MacdChart />
        <span className={`${AXIS} left-[15px] top-[10px]`}>0.31</span>
        <span className={`${AXIS} left-[13px] top-[101px]`}><Dash />0.23</span>
      </div>

      <Legend
        name="KDJ"
        width="w-[111px]"
        items={[
          { text: "K:61.09", w: "ml-[3px] w-[184px]", color: "text-[#262626]" },
          { text: "D:60.99", w: "w-[183px]", color: "text-[#ecc22e]" },
          { text: "J:61.27", w: "", color: "text-[#c32cc8]" },
        ]}
      />
      <div className="relative h-[135px]">
        <KdjChart />
        <span className={`${AXIS} left-[15px] top-[10px]`}>106.96</span>
        <span className={`${AXIS} left-[13px] top-[102px]`}><Dash />5.60</span>
        <div className="absolute right-[14px] top-[9px] flex flex-col text-[29px] leading-[34.500px] text-[#cacaca]">
          <span>80</span>
          <span>50</span>
          <span>20</span>
        </div>
      </div>

      <Legend
        name="BIAS"
        width="w-[122px]"
        items={[
          { text: "BIAS1:1.73", w: "ml-[3px] w-[241px]", color: "text-[#262626]" },
          { text: <span>BIAS2:<Dash />2.13</span>, w: "w-[260px]", color: "text-[#ecc22e]" },
          { text: "BIAS3:7.33", w: "", color: "text-[#c32cc8]" },
        ]}
      />
      <div className="relative h-[135px]">
        <BiasChart />
        <span className={`${AXIS} left-[15px] top-[10px]`}>49.09</span>
        <span className={`${AXIS} left-[13px] top-[101px]`}><Dash />11.27</span>
      </div>

      <div className="relative h-[86px]">
        <div className="absolute inset-x-[12px] top-[2px] bottom-0 bg-[#f7f8fa]" />
        <div className="relative">
          <Ruler />
          <div className="flex pl-[17px] pt-[3px] text-[37px] leading-[36px] tracking-[0.2px] text-[#666]">
            <span className="w-[256px]">20240517</span>
            <span className="w-[354px]">20240807</span>
            <span className="w-[270px]">20241107</span>
            <span>20250207</span>
          </div>
        </div>
      </div>

      <PromoBanner />
      <BottomBar />
    </div>
  );
}
